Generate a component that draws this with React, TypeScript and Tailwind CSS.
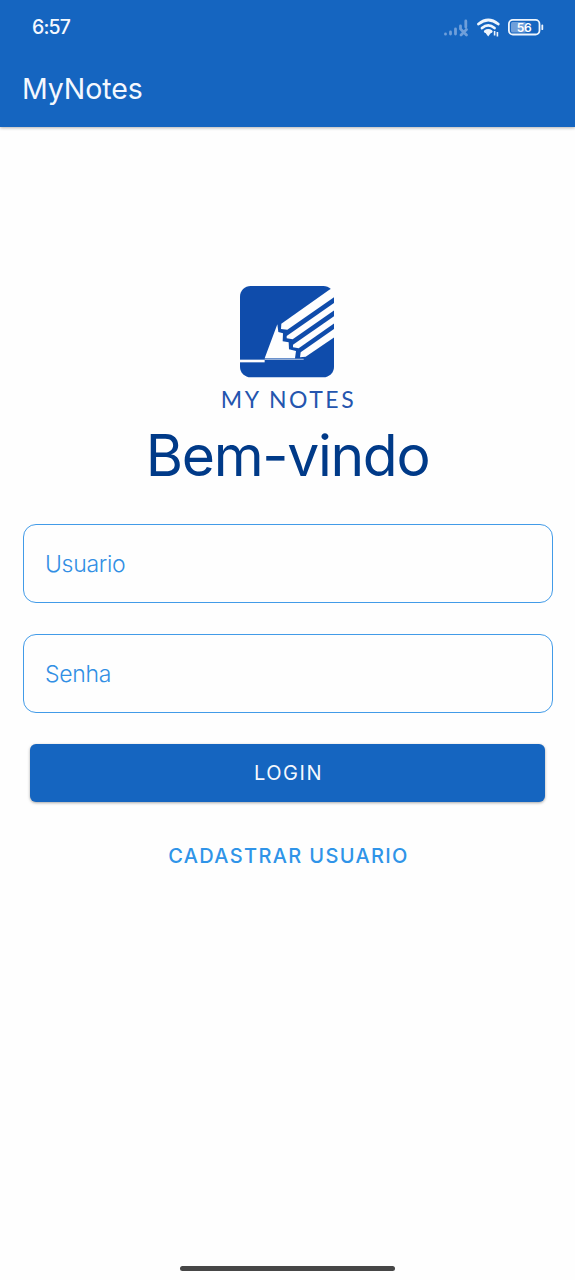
export default function App() {
  return (
    <div className="flex h-[1280px] w-[575px] flex-col overflow-hidden bg-[#fefefe] font-['Inter',sans-serif]">
      <header className="z-10 flex h-[127px] shrink-0 flex-col bg-[#1565c0] text-[#f4f8fe] shadow-[0_1px_3px_rgba(0,0,0,0.3)]">
        <div className="flex h-[55px] items-center justify-between pr-[30px] pl-[32px]">
          <span className="pt-[1px] text-[19.5px] leading-none font-medium tracking-[-0.8px]">6:57</span>
          <svg className="mb-[2px] h-[24px] w-[102px]" viewBox="443 15 102 24" fill="none">
            <g stroke="#6f9fda" strokeWidth="2.8" strokeLinecap="round">
              <path d="M445.5 34V34.2M450.5 32V34M455.5 29V34M460.5 26V29M465.8 21V27M461 29.5L466.5 35M466.5 29.5L461 35" />
            </g>
            <g stroke="#eef5fd" strokeWidth="2.8" strokeLinecap="round">
              <path d="M478.5 24Q488.3 16 498.2 24" />
              <path d="M482 28Q488.2 22.8 494.5 28" />
              <path d="M485.3 31.5Q488.2 29.4 491.2 31.5" />
            </g>
            <path d="M484.5 31.5H492L488.2 36.5Z" fill="#eef5fd" />
            <path d="M494.6 35.5V31M497.4 32V36.5" stroke="#eef5fd" strokeWidth="1.6" />
            <rect x="508.9" y="19.9" width="30.6" height="14.6" rx="4" stroke="#eef5fd" strokeWidth="1.8" />
            <rect x="511" y="22" width="15" height="10.5" rx="1.5" fill="#6f9fda" />
            <path d="M542.3 25.5V29.2" stroke="#eef5fd" strokeWidth="1.8" strokeLinecap="round" />
            <text x="524" y="31.6" textAnchor="middle" fill="#fff" fontSize="12" fontWeight="600" letterSpacing="-0.4">56</text>
          </svg>
        </div>
        <h1 className="pt-[16px] pl-[22px] text-[28.5px] leading-[36px] font-normal tracking-[-0.1px]">MyNotes</h1>
      </header>
      <main className="flex flex-1 flex-col items-center">
        <svg className="mt-[159px] mr-[1px] h-[92px] w-[94px]" viewBox="91 33 282 276">
          <rect x="91" y="33" width="282" height="274" rx="32" fill="#0f4cab" />
          <g fill="#fefefe">
            <path d="M203 148L206 171L220 175L219 199L237 202L238 223L259 228L256 250H165Z" />
            <path d="M358 45L374 35V66L233 164L214 162L215 146Z" />
            <path d="M374 83V106L249 193L231 190V183Z" />
            <path d="M374 123V145L267 220L250 217V209Z" />
            <path d="M374 161V187L288 245L271 247L273 232Z" />
            <path d="M90 254H165V262H90Z" />
            <path d="M165 251H282V254H165Z" opacity="0.75" />
          </g>
        </svg>
        <p className="mt-[6px] mb-[1px] pl-[2px] text-[23px] leading-[30px] tracking-[2.5px] text-[#2455ae] font-['Lato',sans-serif]">MY NOTES</p>
        <h2 className="pt-[2px] text-[57px] leading-[78px] font-normal tracking-[-1.3px] text-[#003a88]">Bem-vindo</h2>
        <form className="flex w-full flex-col px-[22.5px]">
          <input className="mt-[29px] h-[79px] rounded-[13px] border border-[#429be8] px-[21.5px] text-[23px] font-[350] tracking-[-0.3px] placeholder:text-[#318fe4] placeholder:opacity-100" placeholder="Usuario" />
          <input type="password" className="mt-[31px] h-[79px] rounded-[13px] border border-[#429be8] px-[21.5px] text-[23px] font-[350] tracking-[-0.3px] placeholder:text-[#318fe4]" placeholder="Senha" />
          <button type="button" className="mx-[7.5px] mt-[31px] h-[58px] rounded-[6px] bg-[#1565c0] pl-[2px] text-[20px] tracking-[1.5px] text-[#f4f8fe] shadow-[0_1px_3px_rgba(0,0,0,0.35)]">LOGIN</button>
          <button type="button" className="mx-[7.5px] mt-[25px] h-[58px] pl-[2px] text-[20px] font-medium tracking-[1.35px] text-[#2f94e8]">CADASTRAR USUARIO</button>
        </form>
      </main>
      <div className="mb-[9px] h-[5px] w-[215px] self-center rounded-full bg-[#464646]" />
    </div>
  );
}
